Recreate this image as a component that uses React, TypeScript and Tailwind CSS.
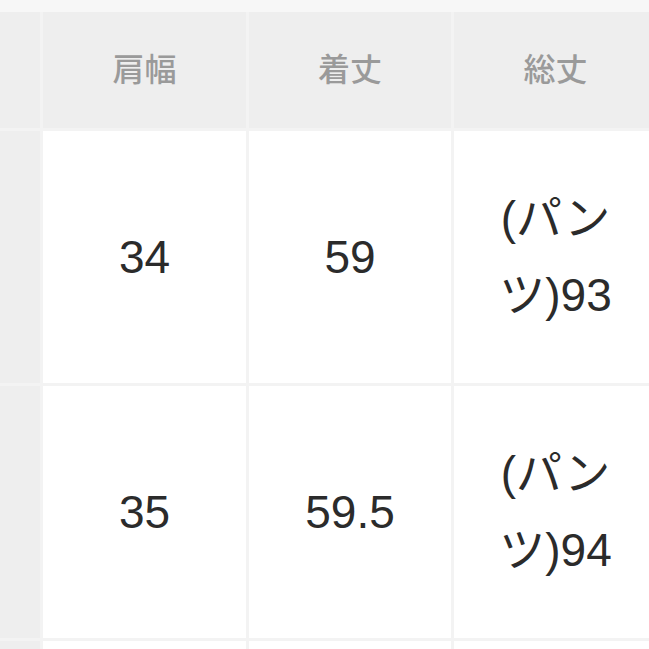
const headers = ["肩幅", "着丈", "総丈"];

const rows = [
  ["34", "59", "(パンツ)93"],
  ["35", "59.5", "(パンツ)94"],
  ["", "", ""],
];

const font = {
  fontFamily: '"Liberation Sans", "Noto Sans CJK JP", sans-serif',
};

export default function App() {
  return (
    <div className="w-[649px] h-[649px] overflow-hidden bg-[#f7f7f7] pt-[12px]" style={font}>
      <div className="grid w-[700px] grid-cols-[40px_203px_202px_203px] grid-rows-[116px_252px_252px_252px] gap-[3px] bg-[#f3f3f3]">
        <div className="bg-[#eeeeee]" />
        {headers.map((h) => (
          <div
            key={h}
            className="flex items-center justify-center bg-[#eeeeee] text-[32px] font-medium text-[#9a9a9a]"
          >
            {h}
          </div>
        ))}
        {rows.map((row, i) => (
          <div key={i} className="contents">
            <div className="bg-[#eeeeee]" />
            {row.map((cell, j) => (
              <div key={j} className="flex items-center justify-center bg-white">
                <span className="max-w-[150px] text-center text-[46px] leading-[77px] text-[#2b2b2b]">
                  {cell}
                </span>
              </div>
            ))}
          </div>
        ))}
      </div>
    </div>
  );
}
